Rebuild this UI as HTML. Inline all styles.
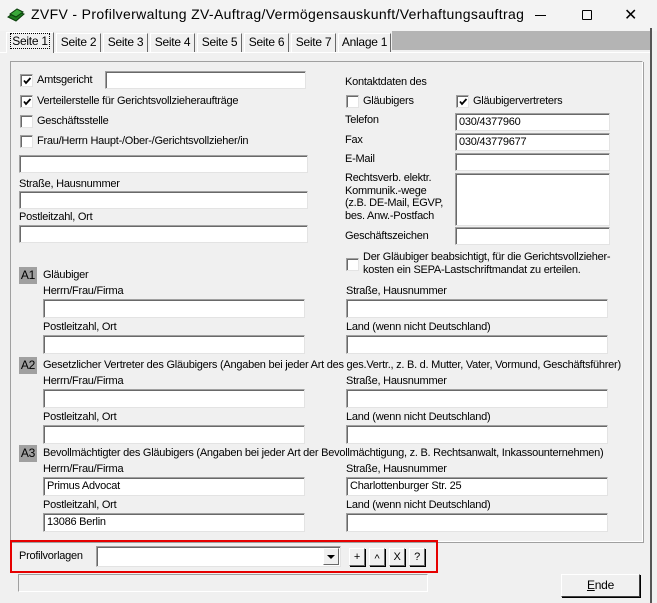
<!DOCTYPE html>
<html><head><meta charset="utf-8">
<style>
*{box-sizing:border-box;margin:0;padding:0}
body{width:657px;height:603px;background:#f0f0f0;font-family:"Liberation Sans",sans-serif;font-size:11px;letter-spacing:-0.25px;color:#000;position:relative;overflow:hidden}
.a{position:absolute;white-space:nowrap}
.t{position:absolute;white-space:nowrap;line-height:13px}
.in{position:absolute;background:#fff;border-top:1px solid #a0a0a0;border-left:1px solid #a0a0a0;border-right:1px solid #e3e3e3;border-bottom:1px solid #e3e3e3;box-shadow:inset 1px 1px 0 #696969;font-size:11px;line-height:16px;padding-left:3px}
.cb{position:absolute;width:13px;height:13px;background:#fff;border:1px solid #a0a0a0;border-right-color:#e3e3e3;border-bottom-color:#e3e3e3;box-shadow:inset 1px 1px 0 #696969}
.cb svg{position:absolute;left:1px;top:1px}
.bd{position:absolute;width:18px;height:17px;background:#a0a0a0;font-size:12px;line-height:17px;text-align:center}
.tab{position:absolute;top:33px;height:19px;background:#f0f0f0;border:1px solid #fff;border-right:1px solid #696969;border-bottom:none;font-size:12px;line-height:17px;text-align:center}
.btn{position:absolute;background:#f0f0f0;border:1px solid #fff;border-right-color:#696969;border-bottom-color:#696969;box-shadow:1px 1px 0 #000;text-align:center;font-size:11px}
</style></head><body>
<div class="a" style="left:0;top:0;width:657px;height:31px;background:#f3f3f3"></div>
<svg class="a" style="left:7px;top:7px" width="18" height="16" viewBox="0 0 18 16"><path d="M1 10 L9 4 L17 7 L9 14 Z" fill="#1e7a1e" stroke="#0b3d0b"/><path d="M3 7 L10 2 L16 5 L9 10 Z" fill="#3aa83a" stroke="#0b3d0b"/></svg>
<div class="a" style="left:31px;top:6px;font-size:14px;letter-spacing:0.35px">ZVFV - Profilverwaltung ZV-Auftrag/Vermögensauskunft/Verhaftungsauftrag</div>
<div class="a" style="left:535px;top:15px;width:11px;height:1px;background:#000"></div>
<div class="a" style="left:582px;top:10px;width:10px;height:10px;border:1px solid #000;border-radius:1px"></div>
<div class="a" style="left:624px;top:5px;font-size:16px;letter-spacing:0">✕</div>
<div class="a" style="left:650px;top:28px;width:2px;height:575px;background:#555"></div>
<div class="a" style="left:392px;top:31px;width:258px;height:19px;background:#b4b4b4"></div>
<div class="a" style="left:0;top:52px;width:650px;height:1px;background:#fff"></div>
<div class="tab" style="left:6px;width:48px;top:32px;height:21px"><span style="border:1px dotted #000;padding:0 1px">Seite 1</span></div>
<div class="tab" style="left:56px;width:45px">Seite 2</div>
<div class="tab" style="left:103px;width:45px">Seite 3</div>
<div class="tab" style="left:150px;width:45px">Seite 4</div>
<div class="tab" style="left:197px;width:45px">Seite 5</div>
<div class="tab" style="left:244px;width:45px">Seite 6</div>
<div class="tab" style="left:291px;width:45px">Seite 7</div>
<div class="tab" style="left:338px;width:53px">Anlage 1</div>
<div class="a" style="left:10px;top:61px;width:633px;height:481px;border:1px solid #a0a0a0;border-right-color:#fff;border-bottom-color:#fff;box-shadow:1px 1px 0 #a0a0a0"></div>

<div class="cb" style="left:20px;top:74px"><svg width="11" height="11"><path d="M2 4.5 L4 7 L8.5 2" fill="none" stroke="#000" stroke-width="1.8"/></svg></div><div class="t" style="left:37px;top:74px">Amtsgericht</div>
<div class="in" style="left:105px;top:71px;width:201px;height:18px"></div>
<div class="cb" style="left:20px;top:95px"><svg width="11" height="11"><path d="M2 4.5 L4 7 L8.5 2" fill="none" stroke="#000" stroke-width="1.8"/></svg></div><div class="t" style="left:37px;top:95px">Verteilerstelle für Gerichtsvollzieheraufträge</div>
<div class="cb" style="left:20px;top:115px"></div><div class="t" style="left:37px;top:115px">Geschäftsstelle</div>
<div class="cb" style="left:20px;top:135px"></div><div class="t" style="left:37px;top:135px">Frau/Herrn Haupt-/Ober-/Gerichtsvollzieher/in</div>
<div class="in" style="left:19px;top:155px;width:289px;height:18px"></div>
<div class="t" style="left:19px;top:178px">Straße, Hausnummer</div>
<div class="in" style="left:19px;top:191px;width:289px;height:18px"></div>
<div class="t" style="left:19px;top:211px">Postleitzahl, Ort</div>
<div class="in" style="left:19px;top:225px;width:289px;height:18px"></div>

<div class="t" style="left:345px;top:76px">Kontaktdaten des</div>
<div class="cb" style="left:346px;top:95px"></div><div class="t" style="left:363px;top:95px">Gläubigers</div>
<div class="cb" style="left:456px;top:95px"><svg width="11" height="11"><path d="M2 4.5 L4 7 L8.5 2" fill="none" stroke="#000" stroke-width="1.8"/></svg></div><div class="t" style="left:473px;top:95px">Gläubigervertreters</div>
<div class="t" style="left:345px;top:114px">Telefon</div>
<div class="in" style="left:455px;top:113px;width:155px;height:18px">030/4377960</div>
<div class="t" style="left:345px;top:134px">Fax</div>
<div class="in" style="left:455px;top:133px;width:155px;height:18px">030/43779677</div>
<div class="t" style="left:345px;top:153px">E-Mail</div>
<div class="in" style="left:455px;top:153px;width:155px;height:18px"></div>
<div class="t" style="left:345px;top:172px;line-height:12.5px">Rechtsverb. elektr.<br>Kommunik.-wege<br>(z.B. DE-Mail, EGVP,<br>bes. Anw.-Postfach</div>
<div class="in" style="left:455px;top:173px;width:155px;height:53px"></div>
<div class="t" style="left:345px;top:230px">Geschäftszeichen</div>
<div class="in" style="left:455px;top:227px;width:155px;height:18px"></div>
<div class="cb" style="left:346px;top:258px"></div>
<div class="t" style="left:363px;top:251px;line-height:13px">Der Gläubiger beabsichtigt, für die Gerichtsvollzieher-<br>kosten ein SEPA-Lastschriftmandat zu erteilen.</div>

<div class="bd" style="left:19px;top:267px">A1</div><div class="t" style="left:43px;top:269px">Gläubiger</div>
<div class="t" style="left:43px;top:285px">Herrn/Frau/Firma</div><div class="t" style="left:346px;top:285px">Straße, Hausnummer</div>
<div class="in" style="left:43px;top:299px;width:262px;height:19px"></div><div class="in" style="left:346px;top:299px;width:262px;height:19px"></div>
<div class="t" style="left:43px;top:321px">Postleitzahl, Ort</div><div class="t" style="left:346px;top:321px">Land (wenn nicht Deutschland)</div>
<div class="in" style="left:43px;top:335px;width:262px;height:19px"></div><div class="in" style="left:346px;top:335px;width:262px;height:19px"></div>

<div class="bd" style="left:19px;top:357px">A2</div><div class="t" style="left:43px;top:359px">Gesetzlicher Vertreter des Gläubigers (Angaben bei jeder Art des ges.Vertr., z. B. d. Mutter, Vater, Vormund, Geschäftsführer)</div>
<div class="t" style="left:43px;top:375px">Herrn/Frau/Firma</div><div class="t" style="left:346px;top:375px">Straße, Hausnummer</div>
<div class="in" style="left:43px;top:389px;width:262px;height:19px"></div><div class="in" style="left:346px;top:389px;width:262px;height:19px"></div>
<div class="t" style="left:43px;top:411px">Postleitzahl, Ort</div><div class="t" style="left:346px;top:411px">Land (wenn nicht Deutschland)</div>
<div class="in" style="left:43px;top:425px;width:262px;height:19px"></div><div class="in" style="left:346px;top:425px;width:262px;height:19px"></div>

<div class="bd" style="left:19px;top:445px">A3</div><div class="t" style="left:43px;top:447px">Bevollmächtigter des Gläubigers (Angaben bei jeder Art der Bevollmächtigung, z. B. Rechtsanwalt, Inkassounternehmen)</div>
<div class="t" style="left:43px;top:463px">Herrn/Frau/Firma</div><div class="t" style="left:346px;top:463px">Straße, Hausnummer</div>
<div class="in" style="left:43px;top:477px;width:262px;height:19px">Primus Advocat</div><div class="in" style="left:346px;top:477px;width:262px;height:19px">Charlottenburger Str. 25</div>
<div class="t" style="left:43px;top:499px">Postleitzahl, Ort</div><div class="t" style="left:346px;top:499px">Land (wenn nicht Deutschland)</div>
<div class="in" style="left:43px;top:513px;width:262px;height:19px">13086 Berlin</div><div class="in" style="left:346px;top:513px;width:262px;height:19px"></div>

<div class="a" style="left:10px;top:540px;width:428px;height:33px;border:2px solid #e60000"></div>
<div class="t" style="left:19px;top:550px">Profilvorlagen</div>
<div class="in" style="left:96px;top:546px;width:245px;height:21px"></div>
<div class="a" style="left:323px;top:548px;width:16px;height:17px;background:#f0f0f0;border:1px solid #fff;border-right-color:#696969;border-bottom-color:#696969"></div>
<div class="a" style="left:327px;top:555px;width:0;height:0;border-left:4px solid transparent;border-right:4px solid transparent;border-top:4px solid #000"></div>
<div class="btn" style="left:349px;top:548px;width:16px;height:18px;line-height:17px">+</div>
<div class="btn" style="left:369px;top:548px;width:16px;height:18px;line-height:20px">^</div>
<div class="btn" style="left:389px;top:548px;width:16px;height:18px;line-height:17px">X</div>
<div class="btn" style="left:409px;top:548px;width:16px;height:18px;line-height:17px">?</div>
<div class="a" style="left:18px;top:574px;width:410px;height:18px;border:1px solid #a0a0a0;border-right-color:#fff;border-bottom-color:#fff"></div>
<div class="btn" style="left:561px;top:574px;width:79px;height:23px;line-height:21px;font-size:12px;border-color:#fff #404040 #404040 #fff"><u>E</u>nde</div>
</body></html>
